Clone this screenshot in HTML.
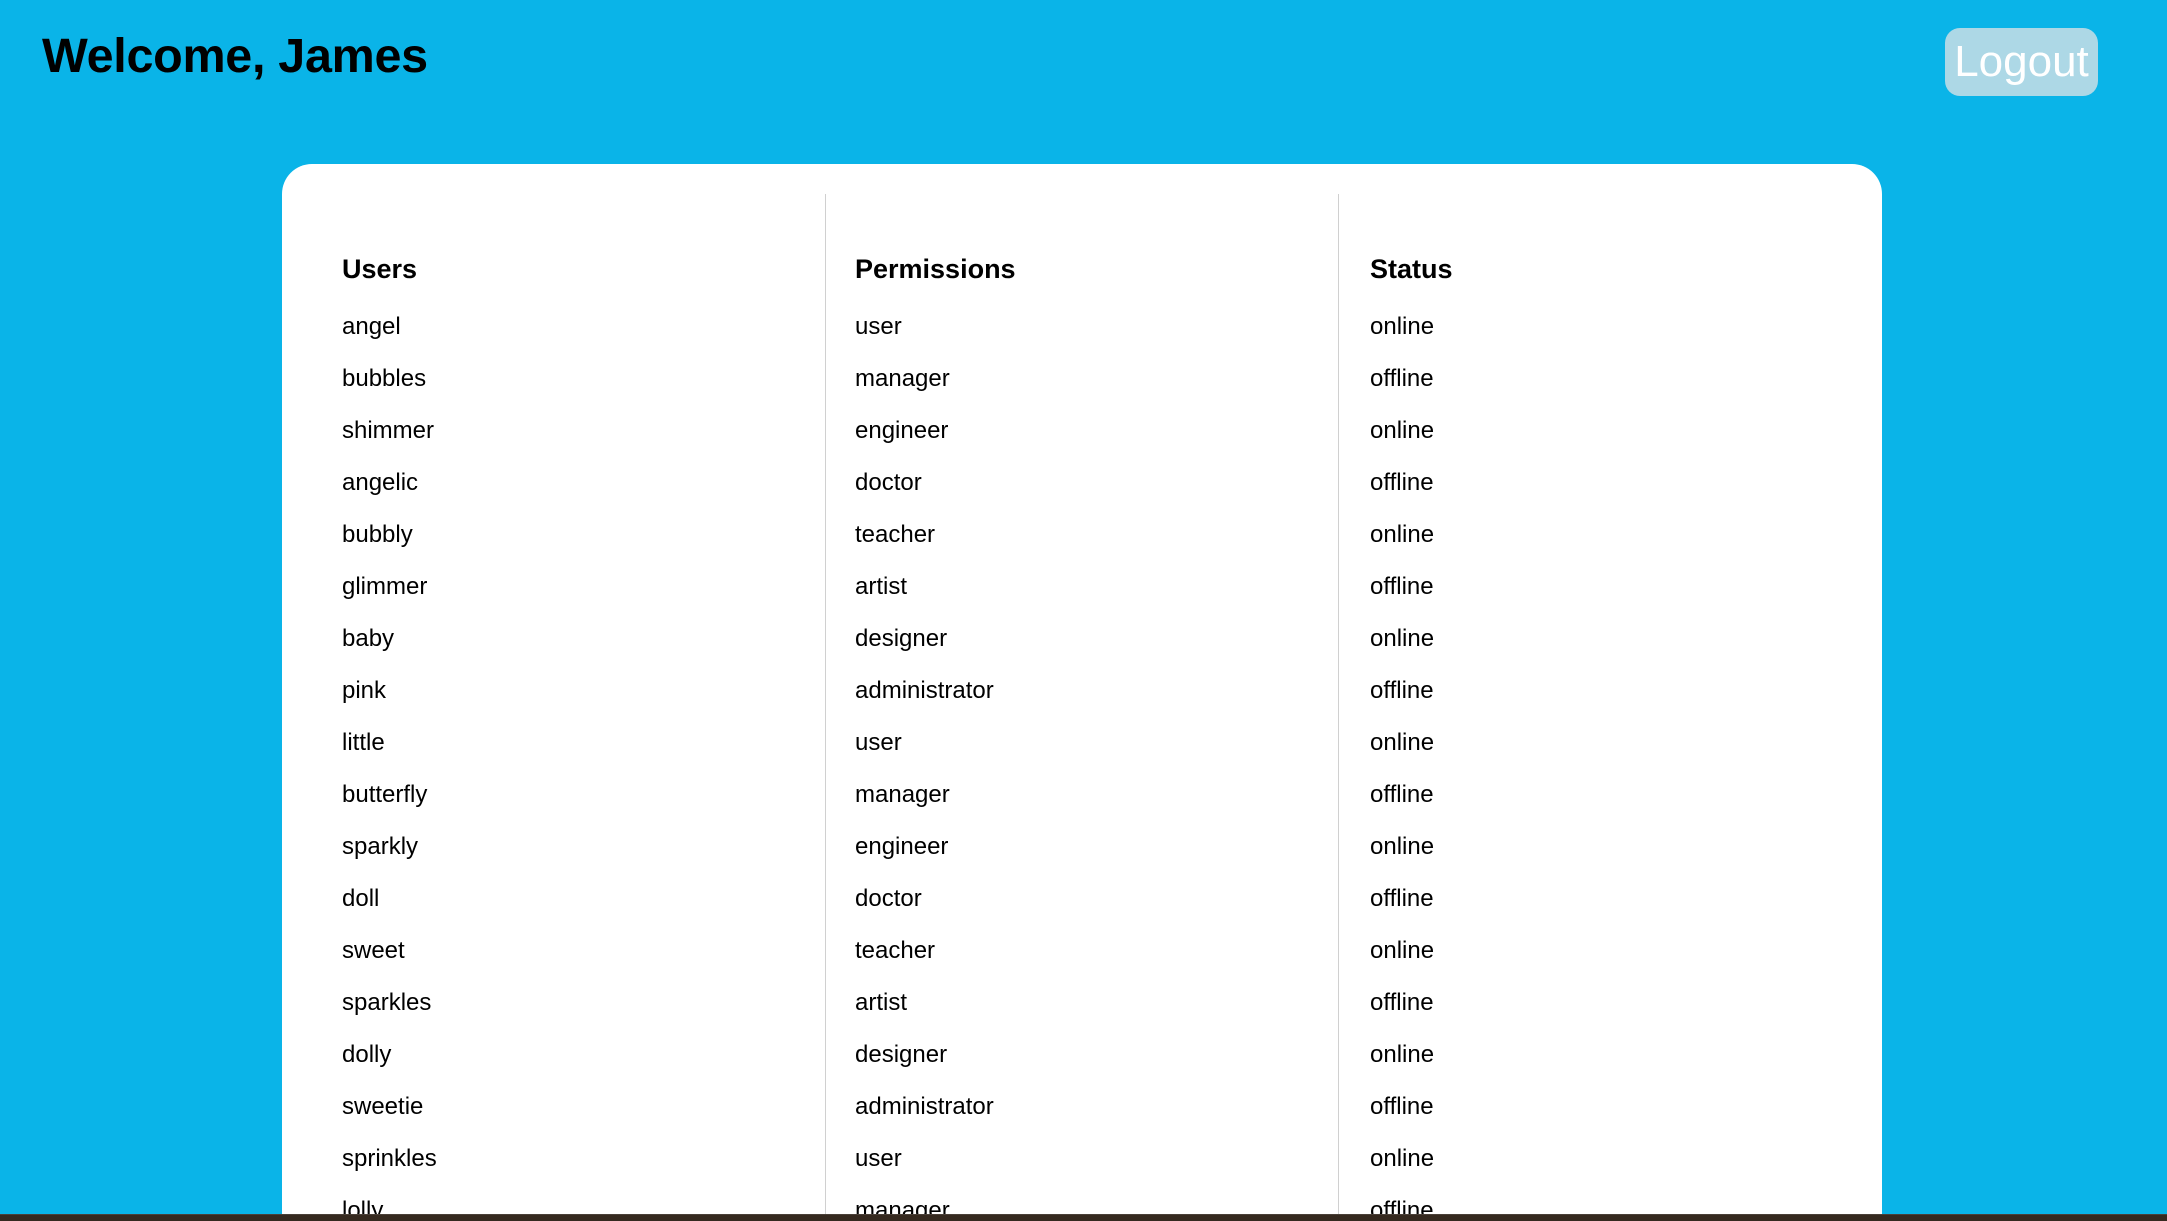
<!DOCTYPE html>
<html><head><meta charset="utf-8"><style>
*{margin:0;padding:0;box-sizing:border-box}
html,body{width:2167px;height:1221px;overflow:hidden;background:#0ab4e8;font-family:"Liberation Sans",Arial,sans-serif;color:#000;position:relative}
h1{position:absolute;left:42px;top:26px;font-size:48.5px;font-weight:bold;line-height:60px;letter-spacing:-0.3px}
.logout{position:absolute;left:1945px;top:28px;width:153px;height:68px;background:#add8e6;border-radius:15px;color:#fff;font-size:44px;line-height:68px;text-align:center}
.card{position:absolute;left:282px;top:164px;width:1600px;height:1050px;background:#fff;border-radius:30px 30px 0 0}
.div{position:absolute;top:194px;width:1px;height:1020px;background:#d0d0d0}
.col{position:absolute;top:249px;height:965px;overflow:hidden}
.col h2{font-size:27px;font-weight:bold;line-height:40px;height:52px}
.col div{font-size:24px;line-height:52px;height:52px;white-space:nowrap}
.bar{position:absolute;left:0;top:1214px;width:2167px;height:7px;background:#35291f;border-top:1px solid #4a4038}
</style></head><body>
<h1>Welcome, James</h1>
<div class="logout">Logout</div>
<div class="card"></div>
<div class="div" style="left:825px"></div>
<div class="div" style="left:1338px"></div>
<div class="col" style="left:342px"><h2>Users</h2>
<div>angel</div><div>bubbles</div><div>shimmer</div><div>angelic</div><div>bubbly</div><div>glimmer</div><div>baby</div><div>pink</div><div>little</div><div>butterfly</div><div>sparkly</div><div>doll</div><div>sweet</div><div>sparkles</div><div>dolly</div><div>sweetie</div><div>sprinkles</div><div>lolly</div></div>
<div class="col" style="left:855px"><h2>Permissions</h2>
<div>user</div><div>manager</div><div>engineer</div><div>doctor</div><div>teacher</div><div>artist</div><div>designer</div><div>administrator</div><div>user</div><div>manager</div><div>engineer</div><div>doctor</div><div>teacher</div><div>artist</div><div>designer</div><div>administrator</div><div>user</div><div>manager</div></div>
<div class="col" style="left:1370px"><h2>Status</h2>
<div>online</div><div>offline</div><div>online</div><div>offline</div><div>online</div><div>offline</div><div>online</div><div>offline</div><div>online</div><div>offline</div><div>online</div><div>offline</div><div>online</div><div>offline</div><div>online</div><div>offline</div><div>online</div><div>offline</div></div>
<div class="bar"></div>
</body></html>
